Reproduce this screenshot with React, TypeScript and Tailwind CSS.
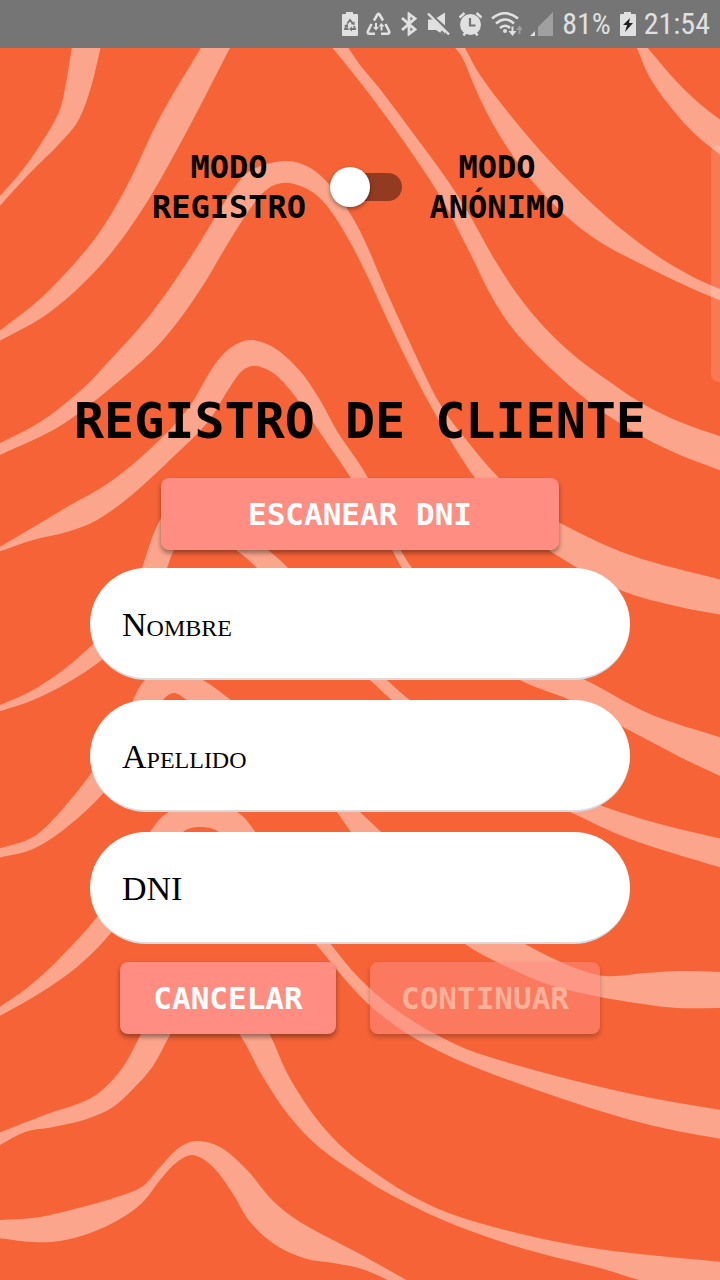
import { useState } from "react";

type Point = [number, number];

const DISPLAY = "font-['DejaVu_Sans_Mono',monospace] font-bold";

const distance = (p: Point, q: Point) => Math.hypot(q[0] - p[0], q[1] - p[1]);

/** Smooth curve through the points; handles are scaled by the distance to each neighbour. */
function curve(points: Point[]): string {
  const at = (i: number) => points[Math.max(0, Math.min(points.length - 1, i))];
  let d = "";
  for (let i = 0; i < points.length - 1; i++) {
    const [a, b, c, e] = [at(i - 1), at(i), at(i + 1), at(i + 2)];
    const length = distance(b, c);
    const out = length / (distance(a, b) + length) / 3;
    const into = length / (distance(c, e) + length) / 3;
    d += `C${b[0] + (c[0] - a[0]) * out} ${b[1] + (c[1] - a[1]) * out} ${c[0] - (e[0] - b[0]) * into} ${c[1] - (e[1] - b[1]) * into} ${c[0]} ${c[1]}`;
  }
  return d;
}

function stripe(upper: Point[], lower: Point[]): string {
  const back = [...lower].reverse();
  return `M${upper[0][0]} ${upper[0][1]}${curve(upper)}L${back[0][0]} ${back[0][1]}${curve(back)}Z`;
}

const STRIPES: [Point[], Point[]][] = [
  [
    [[72, 46], [66, 83], [59, 112], [40, 145], [20, 173], [-2, 198]],
    [[101, 46], [91, 87], [78, 121], [60, 143], [28, 175], [-2, 208]],
  ],
  [
    [[202, 46], [160, 117], [130, 180], [105, 224], [80, 257], [40, 299], [-2, 332]],
    [[231, 46], [180, 144], [140, 213], [100, 266], [50, 312], [-2, 342]],
  ],
  [
    [[-2, 444], [40, 422], [80, 391], [110, 360], [150, 315], [190, 258], [230, 194], [250, 171], [285, 161], [312, 169], [336, 193], [360, 231], [385, 288], [410, 343], [440, 404], [468, 442], [500, 479], [530, 504], [560, 523], [630, 555], [722, 580]],
    [[-2, 456], [60, 426], [120, 380], [163, 340], [200, 290], [230, 240], [255, 202], [272, 186], [290, 183], [315, 194], [335, 217], [360, 261], [397, 340], [433, 410], [475, 478], [520, 528], [553, 553], [620, 590], [680, 607], [722, 615]],
  ],
  [
    [[-2, 548], [67, 507], [110, 482], [150, 449], [187, 410], [213, 367], [230, 348], [250, 340], [273, 347], [300, 371], [320, 400], [337, 431], [368, 478], [390, 530], [412, 568], [450, 615], [515, 652], [583, 679], [650, 714], [722, 738]],
    [[-2, 552], [33, 540], [67, 532], [97, 520], [133, 494], [173, 457], [207, 423], [230, 387], [243, 370], [257, 366], [277, 376], [300, 403], [323, 437], [350, 477], [392, 550], [402, 568], [450, 635], [520, 680], [570, 700], [625, 728], [680, 757], [722, 777]],
  ],
  [
    [[-2, 706], [33, 690], [67, 667], [93, 644], [128, 610], [142, 568], [160, 520], [180, 500], [215, 500], [265, 547], [288, 568], [335, 630], [387, 680], [411, 701], [500, 765], [605, 807], [660, 824], [722, 839]],
    [[-2, 712], [33, 700], [67, 683], [103, 659], [145, 620], [167, 568], [176, 548], [205, 530], [236, 550], [257, 568], [315, 630], [370, 680], [393, 701], [480, 768], [568, 811], [630, 839], [722, 868]],
  ],
  [
    [[-2, 849], [33, 837], [60, 812], [92, 772], [120, 730], [133, 700], [145, 680], [170, 666], [203, 680], [232, 701], [320, 770], [360, 812], [381, 832], [440, 895], [525, 944], [570, 966], [605, 976], [645, 973], [680, 971], [722, 972]],
    [[-2, 858], [33, 849], [67, 827], [106, 790], [140, 740], [163, 700], [174, 693], [187, 700], [270, 750], [312, 777], [337, 812], [351, 832], [400, 895], [465, 944], [493, 960], [547, 984], [600, 997], [643, 1004], [677, 1008], [722, 1008]],
  ],
  [
    [[-2, 1008], [27, 988], [58, 960], [97, 917], [130, 870], [150, 832], [167, 813], [200, 801], [237, 812], [256, 833], [300, 900], [330, 943], [360, 979], [395, 1009], [437, 1035], [477, 1053], [560, 1077], [627, 1093], [673, 1102], [722, 1110]],
    [[-2, 1017], [40, 993], [77, 967], [110, 934], [150, 880], [183, 832], [202, 827], [220, 833], [270, 890], [315, 943], [360, 996], [393, 1024], [427, 1045], [477, 1068], [560, 1098], [627, 1119], [677, 1131], [722, 1139]],
  ],
  [
    [[-2, 1133], [50, 1113], [80, 1103], [100, 1092], [123, 1067], [140, 1036], [165, 990], [200, 970], [240, 985], [270, 1035], [287, 1073], [310, 1110], [333, 1138], [360, 1162], [410, 1195], [460, 1217], [543, 1239], [613, 1251], [722, 1262]],
    [[-2, 1146], [25, 1132], [53, 1127], [87, 1119], [113, 1107], [133, 1089], [153, 1066], [170, 1035], [190, 1005], [215, 1005], [240, 1035], [263, 1077], [290, 1117], [320, 1148], [360, 1176], [393, 1196], [443, 1220], [493, 1239], [543, 1254], [600, 1268], [650, 1282], [722, 1284]],
  ],
  [
    [[-2, 1220], [33, 1218], [67, 1211], [120, 1196], [143, 1186], [160, 1167], [180, 1147], [197, 1141], [220, 1147], [247, 1170], [273, 1201], [300, 1222], [333, 1240], [360, 1254], [410, 1282]],
    [[-2, 1238], [33, 1242], [60, 1241], [90, 1233], [120, 1219], [143, 1202], [160, 1180], [177, 1162], [193, 1155], [213, 1167], [233, 1194], [250, 1222], [277, 1246], [307, 1259], [333, 1263], [362, 1269], [392, 1282]],
  ],
  [
    [[347, 46], [360, 65], [380, 89], [410, 129], [450, 184], [473, 221], [493, 257], [517, 294], [545, 328], [577, 358], [610, 382], [643, 404], [680, 422], [722, 437]],
    [[331, 46], [360, 82], [400, 136], [440, 196], [470, 253], [493, 299], [517, 334], [560, 377], [600, 410], [643, 437], [680, 455], [722, 471]],
  ],
  [
    [[464, 46], [480, 75], [520, 127], [560, 172], [607, 217], [653, 253], [693, 277], [722, 290]],
    [[454, 46], [463, 59], [473, 83], [487, 113], [507, 147], [533, 182], [567, 217], [600, 242], [647, 267], [693, 289], [722, 301]],
  ],
  [
    [[646, 46], [677, 82], [700, 104], [722, 121]],
    [[636, 46], [650, 78], [673, 110], [697, 136], [722, 156]],
  ],
];

function SalmonPattern() {
  return (
    <svg
      aria-hidden="true"
      className="absolute inset-0 h-full w-full"
      viewBox="0 48 720 1232"
      preserveAspectRatio="xMidYMin slice"
    >
      {STRIPES.map(([upper, lower], i) => (
        <path key={i} d={stripe(upper, lower)} fill="#fba68c" />
      ))}
    </svg>
  );
}

function StatusBar() {
  return (
    <header className="flex h-12 items-center justify-end gap-2 bg-[#757575] pr-[10px] font-['Roboto_Condensed','Liberation_Sans_Narrow',Roboto,sans-serif] text-[30px] leading-none text-[#e0e0e0]">
      <svg className="h-6 w-[17px]" viewBox="0 0 17 24" fill="currentColor">
        <path d="M5 0h7v2h4q1 0 1 1v20q0 1-1 1H2q-1 0-1-1V3q0-1 1-1h3z" />
        <path d="M6.200 11.500L9 8l2.800 3.500M13 14l1 3h-3.500M7.500 17H4l1.200-3.500" fill="none" stroke="#757575" strokeWidth="1.800" />
        <path d="M13.500 9.500v3.500l-3.800-1zM11 14.500v5l-3-2.500zM3 13.500l4-1.500v4z" fill="#757575" />
      </svg>
      <svg className="h-6 w-[25px]" viewBox="0 0 25 24" fill="none" stroke="currentColor" strokeWidth="2.600" strokeLinejoin="round">
        <path d="M8 8.500l3.500-6q1-1.500 2 0l3.500 6M5.500 12L2 19q-1 2.800 1.500 2.800H9M19.500 12L23 19q1 2.800-1.500 2.800H15" />
        <path d="M10 11v5M15.500 13.500v5" strokeWidth="2" />
        <path d="M7 15h6l-3 3.500zM12.500 14.500h6l-3-3.500z" fill="currentColor" stroke="none" />
      </svg>
      <svg className="h-6 w-5" viewBox="0 0 20 24" fill="none" stroke="currentColor" strokeWidth="2.800">
        <path d="M3 6l13 11.500-6 4.500V2l6 4.500L3 18" />
      </svg>
      <svg className="h-6 w-[23px]" viewBox="0 0 23 24" fill="currentColor">
        <path d="M1 7.500h5l12 12V24l-9-6H1z" />
        <path d="M18 .5v13L9.500 6z" />
        <path d="M2 0l21.500 22" stroke="#757575" strokeWidth="2" />
        <path d="M1 1.500L22 22.500" stroke="currentColor" strokeWidth="2.400" />
        <path d="M13 20.500l5 4v-3l-3-3z" fill="#757575" />
      </svg>
      <svg className="h-6 w-[25px]" viewBox="0 0 25 24" fill="currentColor">
        <circle cx="12.500" cy="12.500" r="10.500" />
        <path d="M5.500 23.500l2-3M19.500 23.500l-2-3" stroke="currentColor" strokeWidth="2.500" />
        <path d="M1.500 5.500l5-4.500M23.500 5.500l-5-4.500" fill="none" stroke="currentColor" strokeWidth="2.400" />
        <path d="M12 6v7.500h5.500" fill="none" stroke="#757575" strokeWidth="2.200" />
      </svg>
      <svg className="h-6 w-[31px]" viewBox="0 0 31 24" fill="none" stroke="currentColor" strokeWidth="2.600">
        <path d="M1 6.500q13-10.500 26 0M5 11.500q9-8 18 0M9 16q5-4.500 10 0" />
        <circle cx="14" cy="19" r="2" fill="currentColor" stroke="none" />
        <path d="M21.500 14.500v6" strokeWidth="2" />
        <path d="M17.500 19h8L21.500 24z" fill="currentColor" stroke="none" />
        <path d="M28.500 22v-5" stroke="#a0a0a0" strokeWidth="2" />
        <path d="M25 18h7l-3.500-4.500z" fill="#a0a0a0" stroke="none" />
      </svg>
      <svg className="h-6 w-6" viewBox="0 0 24 24">
        <path d="M23 0v24H8V15z" fill="#a0a0a0" />
        <path d="M5 19v5H0z" fill="currentColor" />
      </svg>
      <span>81%</span>
      <svg className="h-6 w-[17px]" viewBox="0 0 17 24" fill="currentColor">
        <path d="M5 0h7v2h4q1 0 1 1v20q0 1-1 1H2q-1 0-1-1V3q0-1 1-1h3z" />
        <path d="M11 6L4 13h4l-2 7 8-9h-4z" fill="#222" />
      </svg>
      <span>21:54</span>
    </header>
  );
}

function Field({ name, text }: { name: string; text: string }) {
  return (
    <input
      name={name}
      type="text"
      aria-label={text}
      placeholder={text}
      className="h-28 w-3/4 rounded-full border-b-2 border-[#d9dadb] bg-white px-8 pt-1 font-['Liberation_Serif',serif] text-[34px] text-black outline-none [font-variant:small-caps] placeholder:text-black placeholder:opacity-100"
    />
  );
}

export default function App() {
  const [anonymous, setAnonymous] = useState(false);

  return (
    <div className="flex min-h-screen flex-col">
      <StatusBar />
      <main className="relative flex-1 overflow-hidden bg-[#f66337]">
        <SalmonPattern />
        <div className="relative flex flex-col items-center pt-[99px]">
          <div className={`${DISPLAY} flex items-center justify-center gap-6 text-center text-[32px] leading-10 text-black`}>
            <span className="w-[154px]">MODO REGISTRO</span>
            <input
              id="modo"
              type="checkbox"
              role="switch"
              checked={anonymous}
              onChange={(e) => setAnonymous(e.target.checked)}
              className="relative ml-1.5 h-7 w-[66px] appearance-none rounded-full bg-black/40 before:absolute before:-top-1.5 before:-left-1.5 before:size-10 before:rounded-full before:bg-white before:shadow-[0_2px_4px_rgba(0,0,0,0.4)] checked:before:left-8"
            />
            <label htmlFor="modo" className="w-[142px]">
              MODO ANÓNIMO
            </label>
          </div>

          <h1 className={`${DISPLAY} mt-[164px] text-center text-[50px] leading-[60px] text-black`}>
            REGISTRO DE CLIENTE
          </h1>

          <form className="mt-[27px] flex w-full flex-col items-center" onSubmit={(e) => e.preventDefault()}>
            <button
              type="button"
              className={`${DISPLAY} h-[72px] w-[398px] rounded-lg bg-[#ff8d82] text-[31px] text-white shadow-[0_3px_5px_rgba(0,0,0,0.4)]`}
            >
              ESCANEAR DNI
            </button>
            <div className="my-[18px] flex w-full flex-col items-center gap-5">
              <Field name="nombre" text="Nombre" />
              <Field name="apellido" text="Apellido" />
              <Field name="dni" text="DNI" />
            </div>
            <div className="flex gap-[34px]">
              <button
                type="button"
                className={`${DISPLAY} h-[72px] w-[216px] rounded-lg bg-[#ff8d82] text-[31px] text-white shadow-[0_3px_5px_rgba(0,0,0,0.4)]`}
              >
                CANCELAR
              </button>
              <button
                type="submit"
                disabled
                className={`${DISPLAY} h-[72px] w-[230px] rounded-lg bg-[#ff8d82]/55 text-[31px] text-[#ffb199] shadow-[0_3px_5px_rgba(0,0,0,0.25)]`}
              >
                CONTINUAR
              </button>
            </div>
          </form>
        </div>
        <div className="absolute top-[97px] right-0 h-[237px] w-[9px] rounded-l-lg bg-white/15" />
      </main>
    </div>
  );
}
